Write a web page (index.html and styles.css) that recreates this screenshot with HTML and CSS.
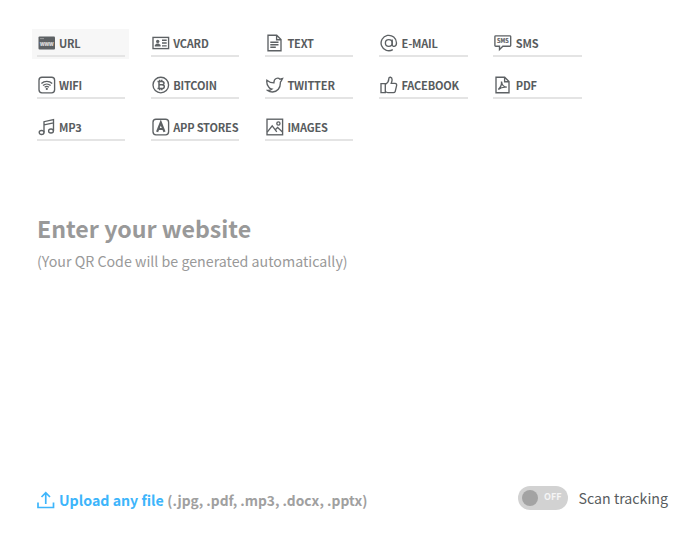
FILE: index.html
```html
<!DOCTYPE html>
<html lang="en">
<head>
<meta charset="utf-8">
<title>QR Code generator</title>
<link rel="stylesheet" href="styles.css">
</head>
<body>
<main class="page">
  <nav class="types">
    <a class="type active"><span class="inner"><svg class="icon" viewBox="0 0 18 18"><rect x="0.500" y="2.500" width="16.500" height="13" rx="1" class="solid"/><path d="M2 4.600h4" stroke="#aaa" stroke-width=".8"/><text x="8.800" y="11.600" class="www">WWW</text></svg><span class="label">URL</span></span></a>
    <a class="type"><span class="inner"><svg class="icon" viewBox="0 0 18 18"><rect x="1" y="3.400" width="15.600" height="11.200"/><circle cx="5.700" cy="7.400" r="1.700" class="solid"/><path class="solid" d="M2.800 12.400V11l2-1.500h1.800l2 1.500v1.400z"/><path d="M10 6.200h4.700M10 9h4.700M10 11.800h4.700"/></svg><span class="label">VCARD</span></span></a>
    <a class="type"><span class="inner"><svg class="icon" viewBox="0 0 18 18"><path d="M2 1.200h8.700L15 5.500v11.200H2zM10.600 1.400v4.300h4.200M4.300 8.200h8.200M4.300 10.700h8.200M4.300 13.200h5.500"/></svg><span class="label">TEXT</span></span></a>
    <a class="type"><span class="inner"><svg class="icon" viewBox="0 0 18 18"><circle cx="8.800" cy="9" r="3.400"/><path d="M12.200 5.500v5c0 2.700 4.300 2.600 4.300-1.500a7.700 7.700 0 1 0-3.700 6.600"/></svg><span class="label">E-MAIL</span></span></a>
    <a class="type"><span class="inner"><svg class="icon" viewBox="0 0 18 18"><path d="M1.700 1.800h14.200q.8 0 .8.800v8.800q0 .8-.8.800H8.800l-3.300 3.400v-3.400H1.700q-.8 0-.8-.8V2.600q0-.8.800-.8z"/><text x="8.800" y="9.100" class="sms">SMS</text></svg><span class="label">SMS</span></span></a>

    <a class="type"><span class="inner"><svg class="icon" viewBox="0 0 18 18"><rect x="1" y="1.200" width="15.600" height="15.600" rx="3"/><path d="M3.400 7.600c3-3 7.800-3 10.800 0M5 9.600c2.200-2 5.400-2 7.600 0M6.700 11.300c1.300-1.100 2.900-1.100 4.200 0"/><circle cx="8.800" cy="12.900" r="1.100" class="solid"/></svg><span class="label">WIFI</span></span></a>
    <a class="type"><span class="inner"><svg class="icon" viewBox="0 0 18 18"><circle cx="8.800" cy="9" r="7.800"/><path stroke-width="1.500" d="M5.500 5.500h4.200c3 0 3 3.300.3 3.300H7M10 8.800c3.200 0 3 3.800-.3 3.800H5.500M7 5.500v7M7.700 3.800v1.700M9.800 3.800v1.700M7.700 12.500v1.700M9.800 12.500v1.700"/></svg><span class="label">BITCOIN</span></span></a>
    <a class="type"><span class="inner"><svg class="icon" viewBox="0 0 18 18"><path d="M.9 4.200c2 1.700 4.300 2.700 7 2.700C7.800 2.300 12 1 14 3.200l2.500-.6-1.200 2.300-.9 1.200c.3 6-3.200 9.900-7.900 9.900-2 0-3.600-.5-4.900-1.500 1.800.1 3.300-.4 4.400-1.400-1.600-.2-2.800-.9-3.400-2.200C1.300 9.300.5 6.500.9 4.200z"/></svg><span class="label">TWITTER</span></span></a>
    <a class="type"><span class="inner"><svg class="icon" viewBox="0 0 18 18"><path d="M1 7.600h4.300v9H1zM5.300 8.300c2.200-1.100 3.400-3 3.500-5.300 0-2.700 3.300-2.200 3.300.7 0 1.400-.5 2.600-.9 3.700h3.900c1.300 0 1.800 1 1.500 2.200l-1.300 5.600c-.3 1-1 1.400-2 1.400H7.800c-1 0-1.800-.4-2.500-1"/></svg><span class="label">FACEBOOK</span></span></a>
    <a class="type"><span class="inner"><svg class="icon" viewBox="0 0 18 18"><path d="M2 1.200h8.700L15 5.500v11.200H2zM10.600 1.400v4.300h4.200"/><path d="M7.500 5.500c.4 3.300 2 5.500 5.300 5.700-3.300-.5-6 .3-8.500 2.300 2.300-2.200 3.600-4.600 3.200-8z"/></svg><span class="label">PDF</span></span></a>

    <a class="type"><span class="inner"><svg class="icon" viewBox="0 0 18 18"><ellipse cx="3.600" cy="14.500" rx="2.400" ry="2"/><ellipse cx="13" cy="13" rx="2.400" ry="2"/><path d="M6 14.500V3.700l9.500-2V13M6 6.900l9.500-2"/></svg><span class="label">MP3</span></span></a>
    <a class="type"><span class="inner"><svg class="icon" viewBox="0 0 18 18"><rect x="1" y="1.200" width="15.600" height="15.600" rx="3"/><path class="letter" d="M5.100 13.800L8.800 4.500l3.700 9.300M6.300 11h5"/></svg><span class="label">APP STORES</span></span></a>
    <a class="type"><span class="inner"><svg class="icon" viewBox="0 0 18 18"><rect x="1" y="1.200" width="15.600" height="15.600"/><path d="M1.200 14.200l5-6.300 4.600 5.900M9.300 11.700l2.300-2.200 4.900 4.600"/><circle cx="12.400" cy="5.500" r="1.600"/></svg><span class="label">IMAGES</span></span></a>
  </nav>

  <section class="entry">
    <h1 class="title">Enter your website</h1>
    <p class="hint">(Your QR Code will be generated automatically)</p>
  </section>

  <footer class="footer">
    <div class="upload">
      <svg class="upload-icon" viewBox="0 0 18 18"><path d="M1 11.500v5h15.500v-5M8.750 13V2M4.500 6l4.250-4.300L13 6"/></svg>
      <span class="upload-link">Upload any file</span>
      <span class="formats">(.jpg, .pdf, .mp3, .docx, .pptx)</span>
    </div>
    <div class="tracking">
      <span class="toggle"><span class="knob"></span><span class="off">OFF</span></span>
      <span class="tracking-label">Scan tracking</span>
    </div>
  </footer>
</main>
</body>
</html>
```

FILE: styles.css
```css
* { box-sizing: border-box; }
body {
  margin: 0;
  background: #fff;
  color: #585c5e;
  font-family: "Noto Sans CJK SC", "Open Sans", sans-serif;
}
.page {
  width: 700px;
  height: 536px;
  padding: 29px 32px 0;
  display: flex;
  flex-direction: column;
  overflow: hidden;
}
.types {
  display: grid;
  grid-template-columns: repeat(5, 97px);
  grid-auto-rows: 30px;
  column-gap: 17.200px;
  row-gap: 11.800px;
}
.type { padding: 0 4px 0 4.500px; }
.active { background: #f7f7f7; }
.inner {
  display: flex;
  align-items: center;
  height: 28px;
  padding: 2px 0 0 1px;
  border-bottom: 2px solid #e4e4e4;
}
.icon {
  flex: none;
  width: 18px;
  height: 18px;
  fill: none;
  stroke: #5d6164;
  stroke-width: 1.350;
}
.icon .solid { fill: #5d6164; stroke: none; }
.icon .letter { stroke-width: 2.200; }
.icon .sms,
.icon .www {
  fill: #5d6164;
  stroke: #5d6164;
  stroke-width: 0.200;
  font-size: 5.500px;
  font-weight: 700;
  text-anchor: middle;
}
.icon .www { fill: #ddd; stroke: #ddd; font-size: 5px; }
.label {
  margin-left: 3.500px;
  font-size: 11px;
  letter-spacing: -0.180px;
  font-weight: 700;
  line-height: 18px;
  white-space: nowrap;
}
.entry { margin-top: 69.400px; padding-left: 5px; color: #999; }
.title { margin: 0; font-size: 23.150px; line-height: 32px; font-weight: 700; }
.hint { margin: 5px 0 0; font-size: 14.230px; line-height: 24px; }
.footer {
  display: flex;
  justify-content: space-between;
  align-items: center;
  height: 24px;
  margin-top: 213px;
  padding-left: 5px;
  white-space: nowrap;
}
.upload {
  display: flex;
  align-items: center;
  padding-top: 4px;
  font-size: 14.200px;
  line-height: 20px;
}
.upload-icon {
  width: 18px;
  height: 18px;
  fill: none;
  stroke: #3db5fb;
  stroke-width: 1.700;
}
.upload-link { margin-left: 4px; font-weight: 700; color: #3db5fb; }
.formats { margin-left: 3.500px; font-weight: 700; font-size: 13.750px; color: #a0a0a0; }
.tracking { display: flex; align-items: center; }
.toggle {
  display: flex;
  align-items: center;
  width: 50px;
  height: 24px;
  padding-left: 4px;
  border-radius: 12px;
  background: #d2d2d2;
}
.knob { width: 16px; height: 16px; border-radius: 50%; background: #a3a3a3; }
.off { margin-left: 6px; font-size: 9px; line-height: 18px; font-weight: 700; color: #f5f5f5; padding-bottom: 2px; }
.tracking-label { margin-left: 10.500px; font-size: 14.200px; line-height: 24px; }
```
